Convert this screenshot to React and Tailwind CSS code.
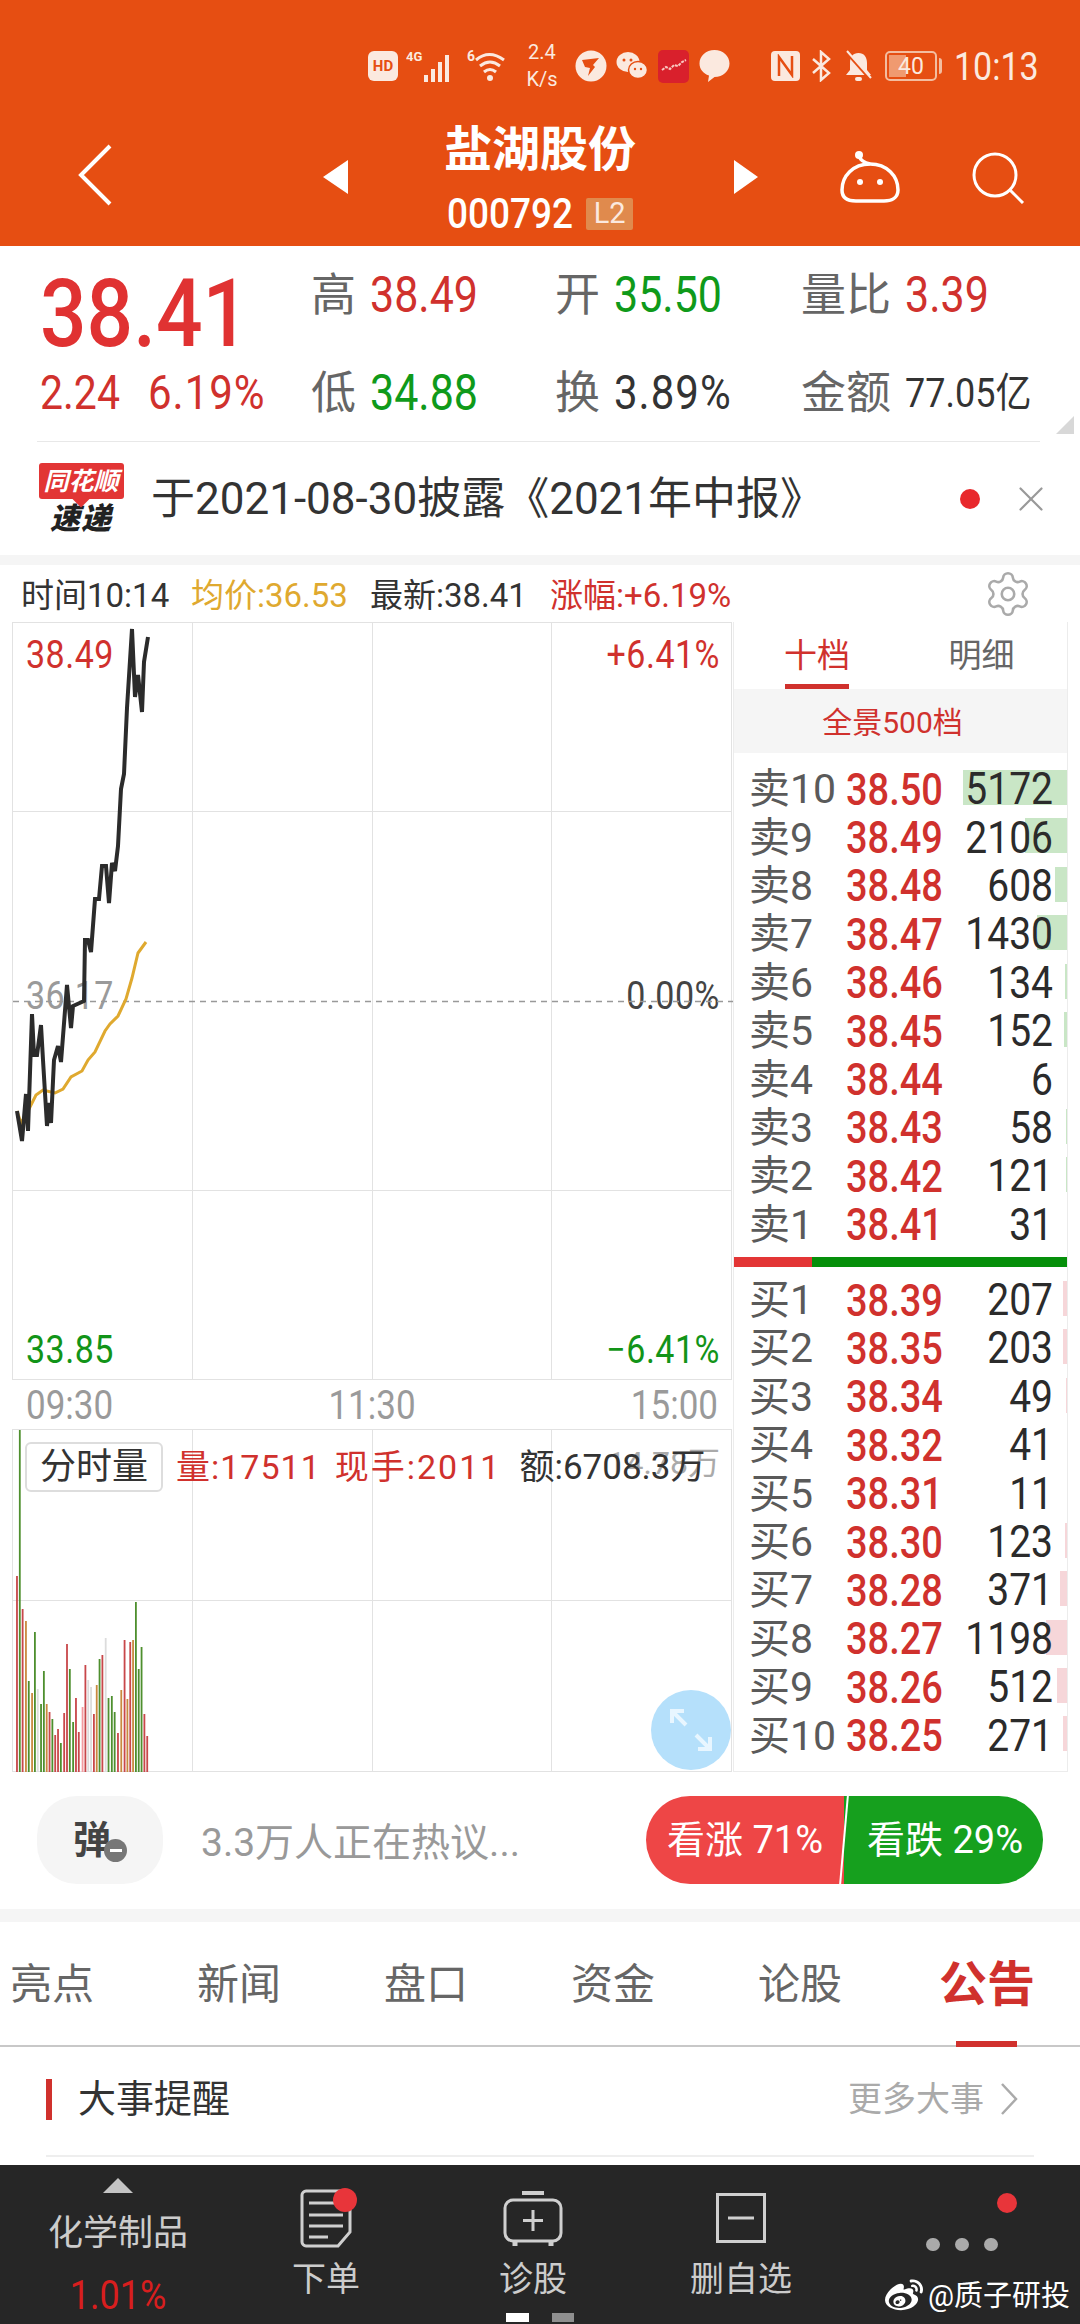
import { Settings, X } from "lucide-react";
import { FaWeibo } from "react-icons/fa";

const tall = "inline-block scale-y-[1.15]";

const asks = [
  ["卖10", "38.50", "5172", 104],
  ["卖9", "38.49", "2106", 42],
  ["卖8", "38.48", "608", 12],
  ["卖7", "38.47", "1430", 30],
  ["卖6", "38.46", "134", 2],
  ["卖5", "38.45", "152", 3],
  ["卖4", "38.44", "6", 0],
  ["卖3", "38.43", "58", 1],
  ["卖2", "38.42", "121", 1],
  ["卖1", "38.41", "31", 0],
];
const bids = [
  ["买1", "38.39", "207", 4],
  ["买2", "38.35", "203", 4],
  ["买3", "38.34", "49", 1],
  ["买4", "38.32", "41", 0],
  ["买5", "38.31", "11", 0],
  ["买6", "38.30", "123", 2],
  ["买7", "38.28", "371", 7],
  ["买8", "38.27", "1198", 21],
  ["买9", "38.26", "512", 10],
  ["买10", "38.25", "271", 4],
];

// traced from the chart, [x, y] in page pixels
const priceLine = [[16,1110],[21,1140],[25,1093],[27,1130],[31,1013],[33,1054],[36,1054],[40,1024],[42,1059],[46,1125],[48,1102],[50,1122],[53,1059],[57,1045],[60,1061],[66,984],[70,1027],[72,1005],[83,1000],[84,939],[87,939],[90,951],[94,898],[98,898],[101,865],[105,865],[108,902],[111,862],[114,870],[117,845],[120,788],[123,773],[126,707],[131,628],[134,696],[137,674],[141,711],[143,661],[147,636]];
const avgLine = [[16,1110],[20,1122],[26,1112],[35,1094],[42,1089],[54,1092],[62,1088],[70,1076],[81,1070],[87,1059],[94,1051],[104,1030],[109,1023],[117,1015],[125,998],[131,977],[137,952],[145,941]];

// [x, height, colour key] for the volume bars
const volBars = [[33,196,"r"],[39,343,"g"],[45,163,"r"],[52,151,"o"],[58,91,"g"],[65,79,"o"],[71,140,"g"],[77,83,"l"],[84,68,"g"],[90,101,"g"],[96,68,"o"],[102,60,"r"],[108,53,"g"],[114,37,"r"],[120,43,"r"],[126,29,"g"],[133,59,"r"],[139,128,"r"],[145,103,"g"],[152,50,"g"],[158,74,"r"],[164,40,"r"],[172,65,"p"],[178,107,"r"],[184,92,"l"],[190,85,"l"],[196,58,"r"],[202,87,"o"],[208,113,"g"],[214,117,"r"],[221,134,"l"],[227,74,"g"],[234,76,"g"],[240,60,"g"],[247,39,"r"],[254,82,"o"],[261,132,"r"],[267,73,"o"],[273,130,"r"],[279,132,"o"],[285,170,"g"],[291,103,"g"],[297,125,"g"],[303,58,"r"],[309,36,"r"]];
const barColor = { r: "#c8474a", g: "#4e8f2e", o: "#c9893f", p: "#f39ba0", l: "#dcdcdc" };

function toPoints(line) {
  return line.map(([x, y]) => `${x - 12},${y - 622}`).join(" ");
}

function StatusBar() {
  return (
    <div className="flex h-[132px] items-center pl-[368px] text-[#fbe9df]">
      <div className="flex h-[30px] w-[30px] items-center justify-center rounded-[6px] bg-[#fbe9df] text-[15px] font-bold text-[#e64e12]">HD</div>
      <svg className="ml-[8px]" width="50" height="34" viewBox="0 0 50 34" fill="#fbe9df">
        <text x="0" y="12" fontSize="13" fontWeight="700">4G</text>
        <rect x="18" y="26" width="4" height="7" />
        <rect x="25" y="20" width="4" height="13" />
        <rect x="32" y="13" width="4" height="20" />
        <rect x="39" y="6" width="4" height="27" />
      </svg>
      <svg className="ml-[11px]" width="44" height="34" viewBox="0 0 44 34" fill="none" stroke="#fbe9df" strokeWidth="3">
        <text x="0" y="12" fontSize="14" fontWeight="700" fill="#fbe9df" stroke="none">6</text>
        <path d="M9 11 Q22 0 37 11" />
        <path d="M13 17 Q23 9 33 17" />
        <path d="M17 23 Q23 18 29 23" />
        <circle cx="23" cy="29" r="3" fill="#fbe9df" stroke="none" />
      </svg>
      <div className="ml-[13px] flex w-[36px] flex-col items-center text-[20px] leading-[27px]">
        <span>2.4</span>
        <span>K/s</span>
      </div>
      <svg className="ml-[15px]" width="32" height="34" viewBox="0 0 32 34">
        <circle cx="16" cy="17" r="15.5" fill="#fbe9df" />
        <path d="M7 11 L24 9 L18 16 L20 18 L13 27 L15 19 L10 18 Z" fill="#e64e12" />
      </svg>
      <svg className="ml-[9px]" width="32" height="32" viewBox="0 0 32 32" fill="#fbe9df">
        <ellipse cx="12" cy="12" rx="11.5" ry="10" />
        <ellipse cx="22" cy="20" rx="9.5" ry="8.5" stroke="#e64e12" strokeWidth="1.5" />
        <circle cx="8" cy="10" r="1.5" fill="#e64e12" />
        <circle cx="15" cy="10" r="1.5" fill="#e64e12" />
        <circle cx="19" cy="19" r="1.2" fill="#e64e12" />
        <circle cx="25" cy="19" r="1.2" fill="#e64e12" />
      </svg>
      <div className="ml-[10px] flex h-[33px] w-[31px] items-center justify-center rounded-[5px] bg-[#d9202c]">
        <svg width="26" height="14" viewBox="0 0 26 14" fill="none" stroke="#f9c7c0" strokeWidth="2">
          <path d="M1 11 L5 8 L9 10 L13 6 L17 7 L21 3 L25 1" strokeDasharray="3 1" />
        </svg>
      </div>
      <svg className="ml-[10px]" width="31" height="34" viewBox="0 0 31 34" fill="#fbe9df">
        <path d="M15.5 1 C24 1 30.5 7 30.5 14.5 C30.5 22 24 28 15.5 28 L9 33 L10 26.5 C4 24.5 .5 20 .5 14.5 C.5 7 7 1 15.5 1 Z" />
      </svg>
      <div className="ml-[41px] flex h-[30px] w-[29px] items-center justify-center rounded-[4px] bg-[#fbe9df]">
        <svg width="21" height="24" viewBox="0 0 21 24" fill="none" stroke="#e64e12" strokeWidth="2.5">
          <path d="M4 22 V3 L17 21 V2" />
        </svg>
      </div>
      <svg className="ml-[11px]" width="21" height="32" viewBox="0 0 21 32" fill="none" stroke="#fbe9df" strokeWidth="2.5">
        <path d="M2 9 L18 23 L10 30 V2 L18 9 L2 23" />
      </svg>
      <svg className="ml-[12px]" width="29" height="32" viewBox="0 0 29 32" fill="#fbe9df">
        <path d="M14.5 3 C20 3 23 7 23 13 V20 L27 25 H2 L6 20 V13 C6 7 9 3 14.5 3 Z" />
        <rect x="11" y="27" width="7" height="4" rx="2" />
        <path d="M3 3 L26 29" stroke="#e64e12" strokeWidth="3" />
        <path d="M3 1 L27 28" stroke="#fbe9df" strokeWidth="2" />
      </svg>
      <div className="ml-[12px] flex items-center">
        <div className="relative flex h-[30px] w-[52px] items-center justify-center overflow-hidden rounded-[5px] border-2 border-[#f3bda0] text-[23px] leading-none">
          <div className="absolute inset-y-[2px] left-[2px] w-[17px] bg-[#f09a70]" />
          <span className="relative">40</span>
        </div>
        <div className="ml-[2px] h-[16px] w-[3px] rounded-r bg-[#f3bda0]" />
      </div>
      <span className={`ml-[12px] text-[34px] leading-none ${tall}`}>10:13</span>
    </div>
  );
}

function NavBar() {
  return (
    <div className="flex h-[114px] items-start text-white">
      <svg className="ml-[77px] mt-[12px]" width="36" height="62" viewBox="0 0 36 62" fill="none" stroke="#fff" strokeWidth="4">
        <path d="M33 2 L4 31 L33 60" />
      </svg>
      <div className="ml-[210px] mt-[28px] h-0 w-0 border-y-[17px] border-r-[25px] border-y-transparent border-r-white" />
      <div className="ml-[97px] -mt-[12px] flex w-[190px] flex-col items-center">
        <span className="whitespace-nowrap text-[48px] font-semibold leading-[60px]">盐湖股份</span>
        <div className="mt-[16px] flex items-center">
          <span className={`text-[37px] leading-[36px] font-medium ${tall}`}>000792</span>
          <span className="ml-[13px] flex h-[32px] w-[47px] items-center justify-center rounded-[2px] bg-[#e08a4d] text-[29px] text-[#fbe9df]">L2</span>
        </div>
      </div>
      <div className="ml-[99px] mt-[28px] h-0 w-0 border-y-[17px] border-l-[24px] border-y-transparent border-l-white" />
      <svg className="ml-[81px] mt-[18px]" width="62" height="54" viewBox="0 0 62 54" fill="none" stroke="#fff" strokeWidth="3.5">
        <circle cx="20" cy="5" r="4" fill="#fff" stroke="none" />
        <path d="M20 6 Q22 12 31 14" />
        <path d="M31 14 C48 14 59 26 59 40 C59 48 52 51 45 51 H17 C9 51 3 48 3 40 C3 26 14 14 31 14 Z" />
        <circle cx="21" cy="32" r="3" fill="#fff" stroke="none" />
        <circle cx="41" cy="32" r="3" fill="#fff" stroke="none" />
      </svg>
      <svg className="ml-[70px] mt-[20px]" width="54" height="52" viewBox="0 0 54 52" fill="none" stroke="#fff" strokeWidth="3">
        <circle cx="24" cy="23" r="21" />
        <path d="M39 38 L52 51" />
      </svg>
    </div>
  );
}

function QuotePanel() {
  const labelCls = "text-[45px] leading-none text-[#666]";
  const numCls = `text-[43px] leading-none ${tall}`;
  return (
    <div className="relative h-[195px] bg-white">
      <div className="grid h-[196px] grid-cols-[311px_244px_246px_1fr] grid-rows-2">
        <div className="pl-[40px] pt-[28px]">
          <span className={`text-[82px] font-medium leading-[80px] text-[#e03232] ${tall}`}>38.41</span>
        </div>
        <div className="flex items-center gap-[14px]">
          <span className={labelCls}>高</span>
          <span className={`${numCls} text-[#d0312d]`}>38.49</span>
        </div>
        <div className="flex items-center gap-[14px]">
          <span className={labelCls}>开</span>
          <span className={`${numCls} text-[#0f9a1a]`}>35.50</span>
        </div>
        <div className="flex items-center gap-[14px]">
          <span className={labelCls}>量比</span>
          <span className={`${numCls} text-[#d0312d]`}>3.39</span>
        </div>
        <div className="flex items-center gap-[28px] pl-[40px] text-[#d0312d]">
          <span className={`text-[41px] leading-none ${tall}`}>2.24</span>
          <span className={`text-[42px] leading-none tracking-[1px] ${tall}`}>6.19%</span>
        </div>
        <div className="flex items-center gap-[14px]">
          <span className={labelCls}>低</span>
          <span className={`${numCls} text-[#0f9a1a]`}>34.88</span>
        </div>
        <div className="flex items-center gap-[14px]">
          <span className={labelCls}>换</span>
          <span className={`text-[42px] leading-none tracking-[1px] text-[#333] ${tall}`}>3.89%</span>
        </div>
        <div className="flex items-center gap-[14px]">
          <span className={labelCls}>金额</span>
          <span className={`text-[36px] leading-none text-[#333] ${tall}`}>77.05亿</span>
        </div>
      </div>
      <div className="absolute bottom-[7px] right-[6px] h-0 w-0 border-b-[18px] border-l-[18px] border-b-[#d8d8d8] border-l-transparent" />
    </div>
  );
}

function NewsRow() {
  return (
    <div className="flex h-[114px] flex-col bg-white px-[37px]">
      <div className="h-px w-[1003px] bg-[#e8e8e8]" />
      <div className="flex flex-1 items-center">
        <div className="relative flex h-[71px] w-[88px] shrink-0 flex-col items-center italic">
          <div className="relative flex h-[36px] w-[85px] items-center justify-center rounded-[3px] bg-[#e23535] text-[25px] font-bold leading-none text-white">
            同花顺
            <div className="absolute -bottom-[6px] left-[36px] h-[12px] w-[12px] rotate-45 bg-[#e23535]" />
          </div>
          <span className="mt-[5px] text-[30px] font-black leading-[30px] tracking-[1px] text-[#222]">速递</span>
        </div>
        <span className="ml-[26px] whitespace-nowrap text-[44px] leading-none text-[#333]">于2021-08-30披露《2021年中报》</span>
        <div className="ml-auto h-[20px] w-[20px] rounded-full bg-[#e8282c]" />
        <X className="ml-[30px] -mr-[9px] text-[#999]" size={42} strokeWidth={1.25} />
      </div>
    </div>
  );
}

function PriceChart() {
  return (
    <div className="relative h-[758px] w-[720px] border-l border-t border-[#e2e2e2]">
      <div className="grid h-full grid-cols-4 grid-rows-4">
        {Array.from({ length: 16 }, (_, i) => (
          <div key={i} className={`border-r border-[#e2e2e2] ${i >= 4 && i < 8 ? "" : "border-b"}`} />
        ))}
      </div>
      <span className={`absolute left-[13px] top-[14px] text-[34px] leading-none tracking-[0.5px] text-[#d0312d] ${tall}`}>38.49</span>
      <span className={`absolute right-[12px] top-[14px] text-[34px] leading-none tracking-[0.5px] text-[#d0312d] ${tall}`}>+6.41%</span>
      <span className={`absolute left-[13px] top-[355px] text-[34px] leading-none tracking-[0.5px] text-[#9a9a9a] ${tall}`}>36.17</span>
      <span className={`absolute right-[12px] top-[355px] text-[34px] leading-none tracking-[0.5px] text-[#444] ${tall}`}>0.00%</span>
      <span className={`absolute bottom-[14px] left-[13px] text-[34px] leading-none tracking-[0.5px] text-[#129418] ${tall}`}>33.85</span>
      <span className={`absolute bottom-[14px] right-[12px] text-[34px] leading-none tracking-[0.5px] text-[#129418] ${tall}`}>−6.41%</span>
      <svg className="absolute inset-0" width="720" height="758" viewBox="0 0 720 758" fill="none">
        <line x1="0" y1="378.5" x2="720" y2="378.5" stroke="#999" strokeWidth="1.5" strokeDasharray="6 5" />
        <polyline points={toPoints(avgLine)} stroke="#dfa92f" strokeWidth="3" />
        <polyline points={toPoints(priceLine)} stroke="#2b2b2b" strokeWidth="4" />
      </svg>
    </div>
  );
}

function VolumeChart() {
  return (
    <div className="relative h-[343px] w-[720px] border-l border-t border-[#e2e2e2]">
      <div className="grid h-full grid-cols-4 grid-rows-2">
        {Array.from({ length: 8 }, (_, i) => (
          <div key={i} className="border-r border-b border-[#e2e2e2]" />
        ))}
      </div>
      <svg className="absolute inset-0" width="720" height="343" viewBox="0 0 720 343">
        {volBars.map(([x, h, c], i) => (
          <rect key={i} x={x / 2.119 - 12.5} y={342 - h} width="1.8" height={h} fill={barColor[c]} />
        ))}
      </svg>
      <span className="absolute right-[12px] top-[17px] text-[32px] leading-none text-[#aaa]">14.78万</span>
      <div className="absolute left-[12px] right-0 top-[12px] flex items-center">
        <div className="flex h-[50px] w-[138px] items-center justify-center rounded-[6px] border-2 border-[#ddd] bg-white text-[36px] leading-none text-[#333]">分时量</div>
        <span className="ml-[13px] whitespace-nowrap text-[34px] leading-none tracking-[1px] text-[#d0312d]">量:17511</span>
        <span className="ml-[14px] whitespace-nowrap text-[34px] leading-none tracking-[2px] text-[#d0312d]">现手:2011</span>
        <span className="ml-[18px] whitespace-nowrap text-[35px] leading-none text-[#333]">额:6708.3万</span>
      </div>
      <div className="absolute bottom-[2px] right-[1px] flex h-[80px] w-[80px] items-center justify-center rounded-full bg-[#b5e0fb]">
        <svg width="46" height="46" viewBox="0 0 46 46" fill="none" stroke="#e8f6ff" strokeWidth="4">
          <path d="M4 16 V4 H16 M4 4 L18 18" />
          <path d="M42 30 V42 H30 M42 42 L28 28" />
        </svg>
      </div>
    </div>
  );
}

function BookRow({ label, price, vol, bar, barCls }) {
  return (
    <div className="relative flex h-[48.4px] items-center pl-[15px] pt-[3px]">
      <div className={`absolute right-0 top-[6px] h-[35px] ${barCls}`} style={{ width: bar }} />
      <span className="relative w-[97px] whitespace-nowrap text-[41px] leading-none text-[#5a5a5a]">{label}</span>
      <span className={`relative w-[100px] text-[38px] font-medium leading-none text-[#d0312d] ${tall}`}>{price}</span>
      <span className={`relative flex-1 pr-[14px] text-right text-[39px] leading-none text-[#2b2b2b] ${tall}`}>{vol}</span>
    </div>
  );
}

function OrderBook() {
  return (
    <div className="ml-px flex h-[1150px] w-[335px] flex-col border-x border-b border-[#ececec]">
      <div className="flex h-[67px] text-[33px] leading-none">
        <div className="relative flex w-[168px] items-start justify-center pt-[17px] text-[#d0312d]">
          <span className="pr-[2px]">十档</span>
          <div className="absolute bottom-0 left-[51px] h-[5px] w-[64px] bg-[#d0312d]" />
        </div>
        <div className="flex flex-1 items-start justify-center pr-[6px] pt-[17px] text-[#666]">明细</div>
      </div>
      <div className="flex h-[64px] items-center justify-center bg-[#f5f5f5] pr-[16px] pt-[2px] text-[30px] text-[#d0312d]">全景500档</div>
      <div className="pt-[11px]">
        {asks.map(([label, price, vol, bar]) => (
          <BookRow key={label} label={label} price={price} vol={vol} bar={bar} barCls="bg-[#c9e6c6]" />
        ))}
      </div>
      <div className="mt-[9px] flex h-[10px]">
        <div className="w-[78px] bg-[#e33535]" />
        <div className="flex-1 bg-[#058f0a]" />
      </div>
      <div className="pt-[8px]">
        {bids.map(([label, price, vol, bar]) => (
          <BookRow key={label} label={label} price={price} vol={vol} bar={bar} barCls="bg-[#f6d6d9]" />
        ))}
      </div>
    </div>
  );
}

function ChartSection() {
  return (
    <div className="bg-white">
      <div className="flex h-[57px] items-center pl-[21px] pt-[4px] text-[33px] leading-none">
        <span className="w-[170px] whitespace-nowrap text-[#333]">时间10:14</span>
        <span className="w-[179px] whitespace-nowrap text-[#dfa92f]">均价:36.53</span>
        <span className="w-[180px] whitespace-nowrap text-[#333]">最新:38.41</span>
        <span className="whitespace-nowrap text-[#d0312d]">涨幅:+6.19%</span>
        <Settings className="ml-auto mr-[47px] -mt-[4px] text-[#aaa]" size={50} strokeWidth={1.25} />
      </div>
      <div className="flex pl-[12px]">
        <div className="flex flex-col">
          <PriceChart />
          <div className="flex h-[49px] w-[720px] items-center justify-between pl-[14px] pr-[14px] pt-[2px] text-[35px] leading-none text-[#9a9a9a]">
            <span className={tall}>09:30</span>
            <span className={tall}>11:30</span>
            <span className={tall}>15:00</span>
          </div>
          <VolumeChart />
        </div>
        <OrderBook />
      </div>
    </div>
  );
}

function CommentRow() {
  return (
    <div className="flex h-[137px] items-start bg-white pl-[37px] pr-[37px] pt-[24px]">
      <div className="relative flex h-[88px] w-[126px] items-center justify-center rounded-[40px] bg-[#f5f5f5]">
        <span className="pr-[16px] text-[38px] font-bold leading-none text-[#444]">弹</span>
        <div className="absolute left-[67px] top-[43px] flex h-[23px] w-[23px] items-center justify-center rounded-full bg-[#777]">
          <div className="h-[3px] w-[12px] bg-white" />
        </div>
      </div>
      <span className="ml-[38px] mt-[28px] whitespace-nowrap text-[39px] leading-none text-[#999]">3.3万人正在热议...</span>
      <div className="relative ml-auto flex h-[88px] w-[397px] overflow-hidden rounded-full text-[38px] leading-none text-white">
        <div className="flex w-[198px] items-center justify-end bg-[#ee4646] pr-[21px]">
          <span className="whitespace-nowrap">看涨 71%</span>
        </div>
        <div className="flex flex-1 items-center justify-end bg-[#16a01e] pr-[20px]">
          <span className="whitespace-nowrap">看跌 29%</span>
        </div>
        <div className="absolute -top-[4px] left-[197px] h-[96px] w-[2px] rotate-[5deg] bg-white" />
      </div>
    </div>
  );
}

function TabsRow() {
  const tabs = ["亮点", "新闻", "盘口", "资金", "论股"];
  return (
    <div className="relative flex h-[125px] items-center border-b-2 border-[#c8c8c8] bg-white pl-[10px] pt-[3px]">
      {tabs.map((t) => (
        <span key={t} className="w-[187px] whitespace-nowrap text-[42px] leading-none text-[#666]">{t}</span>
      ))}
      <span className="ml-[-6px] whitespace-nowrap text-[48px] font-bold leading-none text-[#d0312d]">公告</span>
      <div className="absolute -bottom-[2px] left-[956px] h-[6px] w-[61px] bg-[#d0312d]" />
    </div>
  );
}

function EventsRow() {
  return (
    <div className="h-[118px] bg-white px-[46px]">
      <div className="flex h-[110px] items-center border-b-2 border-[#eee] pb-[4px]">
        <div className="h-[41px] w-[6px] bg-[#d0312d]" />
        <span className="ml-[26px] text-[38px] leading-none text-[#333]">大事提醒</span>
        <span className="ml-auto text-[34px] leading-none text-[#aaa]">更多大事</span>
        <svg className="ml-[16px] mr-[16px]" width="18" height="32" viewBox="0 0 18 32" fill="none" stroke="#aaa" strokeWidth="2.5">
          <path d="M2 1 L16 16 L2 31" />
        </svg>
      </div>
    </div>
  );
}

function BottomBar() {
  const iconStroke = "#cfcfcf";
  const label = "mt-auto mb-[28px] whitespace-nowrap text-[34px] leading-none text-[#ccc]";
  return (
    <div className="relative grid h-[159px] grid-cols-[236px_180px_234px_182px_1fr] bg-[#262626]">
      <div className="flex flex-col items-center pt-[13px]">
        <div className="h-0 w-0 border-x-[15px] border-b-[15px] border-x-transparent border-b-[#c4c4c4]" />
        <span className="mt-[23px] whitespace-nowrap text-[35px] leading-none text-[#ccc]">化学制品</span>
        <span className={`mt-[26px] text-[36px] leading-none text-[#d81e1e] ${tall}`}>1.01%</span>
      </div>
      <div className="flex flex-col items-center pt-[24px]">
        <div className="relative h-[59px] w-[52px]">
          <svg width="52" height="59" viewBox="0 0 52 59" fill="none" stroke={iconStroke} strokeWidth="3">
            <path d="M6 2 H46 C48 2 50 4 50 6 V43 L38 57 H6 C4 57 2 55 2 53 V6 C2 4 4 2 6 2 Z" />
            <path d="M9 14 H38 M9 26 H43 M9 37 H43 M9 48 H28" />
          </svg>
          <div className="absolute -right-[5px] -top-[1px] h-[24px] w-[24px] rounded-full bg-[#e8353a]" />
        </div>
        <span className={label}>下单</span>
      </div>
      <div className="flex flex-col items-center pt-[26px]">
        <svg width="60" height="56" viewBox="0 0 60 56" fill="none" stroke={iconStroke} strokeWidth="3">
          <path d="M19 2 H41" strokeWidth="4" />
          <rect x="2" y="9" width="56" height="41" rx="8" />
          <path d="M30 19 V40 M20 29.5 H40" />
          <path d="M12 51 V55 M48 51 V55" strokeWidth="5" />
        </svg>
        <span className={label}>诊股</span>
      </div>
      <div className="flex flex-col items-center pt-[28px]">
        <svg width="50" height="50" viewBox="0 0 50 50" fill="none" stroke={iconStroke} strokeWidth="3">
          <rect x="1.5" y="1.5" width="47" height="47" />
          <path d="M12 25 H38" />
        </svg>
        <span className={label}>删自选</span>
      </div>
      <div className="relative flex justify-center">
        <div className="absolute left-[165px] top-[28px] h-[20px] w-[20px] rounded-full bg-[#e8353a]" />
        <div className="ml-[12px] mt-[73px] flex h-[13px] gap-[15px]">
          <div className="h-[13px] w-[14px] rounded-full bg-[#aaa]" />
          <div className="h-[13px] w-[14px] rounded-full bg-[#aaa]" />
          <div className="h-[13px] w-[14px] rounded-full bg-[#aaa]" />
        </div>
      </div>
      <div className="absolute bottom-[2px] left-[506px] flex gap-[23px]">
        <div className="h-[9px] w-[23px] bg-white" />
        <div className="h-[9px] w-[22px] bg-[#8f8f8f]" />
      </div>
      <div className="absolute bottom-[9px] right-[10px] flex items-center gap-[5px] text-white">
        <FaWeibo size={38} />
        <span className="whitespace-nowrap text-[29px] leading-none">@质子研投</span>
      </div>
    </div>
  );
}

export default function App() {
  return (
    <div className="flex h-[2324px] w-[1080px] flex-col overflow-hidden bg-white font-['Roboto','Noto_Sans_CJK_SC',sans-serif]">
      <div className="h-[246px] bg-[#e64e12]">
        <StatusBar />
        <NavBar />
      </div>
      <QuotePanel />
      <NewsRow />
      <div className="h-[10px] bg-[#f5f5f5]" />
      <ChartSection />
      <CommentRow />
      <div className="h-[13px] bg-[#f5f5f5]" />
      <TabsRow />
      <EventsRow />
      <BottomBar />
    </div>
  );
}
